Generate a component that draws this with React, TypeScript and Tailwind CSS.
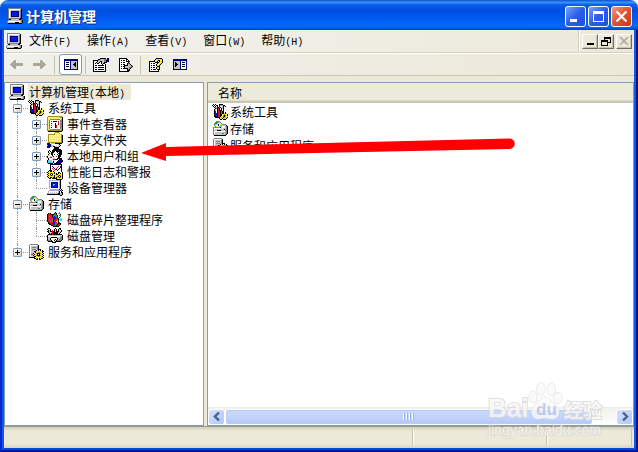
import { VscChromeClose } from "react-icons/vsc";

const colors: Record<string, string> = {
    k: "#000000", w: "#ffffff", g: "#c3c3c3", d: "#808080", b: "#000080", B: "#0018e8",
    y: "#f6e830", o: "#a89018", l: "#fbf6b0", r: "#e01020", n: "#10a830", c: "#40d8e8", m: "#e040c8",
    a: "#aca899", p: "#f4e878", v: "#a8a8dc",
};

const icons: Record<string, string> = {
    computer: `
.ddddddddddddd..
.dwwwwwwwwwwwgk.
.dwggggggggggdk.
.dwgbbbbbbbbgdk.
.dwgbBBBBBBbgdk.
.dwgbBBBBBBbgdk.
.dwgbBBBBBBbgdk.
.dwgbBBBBBBbgdk.
.dwgbbbbbbbbgdk.
.dwggggggggggdk.
.ddddddddddddkk.
..kkggggggggkk..
.dggggggggggggdk
dwwwwwwwwwwwwgdk
dgggggggkkkkggdk
.kkkkkkkkkkkkkk.`,
    tools: `
.k.k...kkkk.....
kwk.kk.kgggkk...
.kwkwk.kwwgkgk..
..kggkkdkggk....
...kdkrk.kgk....
..kcwkrk.kwk....
..kcwkrkkkgk....
..kBwkrrknkk....
..kBwkrrknkk.k..
..kBBkrrknkkyky.
..kBBkrrkkyyoyyk
..kBBkrrkkyokoyk
..kbbkrrkyyokoyy
...kkkkkyoykoyyk
.......kyykyyyk.
........kk.kkk..`,
    storage: `
....dddd........
...dnncyd.......
..dnncwyyd......
..dccwkwyydddd..
..dywwkwccggggk.
...dywwccgwwwgdk
.dddddddkgwwwgdk
.dwwwwwwwgwgggdk
.dwgggggggggkgdk
.dgggkkkkggggddk
.dwwwwwwwwwwwgdk
.dwggggggggggddk
.dwgggggggnnggdk
.dgggggggggggdk.
..kkkkkkkkkkkk..
................`,
    events: `
.oooooooooooooo.
oppppppppppppook
oplppppppppppplk
oppddddddddddpok
opdwwwwwwwwwwdok
opdwrwkkkkwrwdok
opdwwwwwwwwrwdok
opdwbwwwkwwrwdok
opdwwwwwkwwrwdok
opdwrwwwkrwwwdok
opdwwwwwkrwwwdok
opdwbwwwkrwwwdok
opdwwwwwwwwwwdok
oppddddddddddpok
oooooooooooooook
.kkkkkkkkkkkkkk.`,
    shared: `
........oooo....
.......olllpo...
.ooooooolplplpo.
.ollllllllllllok
.olplplplplplpok
.olpppppppppppok
.olplplplplplpok
.olpppppppppppok
.olplplplplplpok
.olpppppppppppok
.ooooooooooooook
bbb.ggggkkkkkkk.
bbbbgwwwwwwgk...
cbbbgggwwwwwgk..
bbbbggkkggggk...
bbb....kkkkk....`,
    users: `
.......kkkkk....
......kkkkkkkk..
..k..kkkkkkkkkk.
.k.k.kkkwkkkkkk.
.kwykkkwwwkwkkk.
..kwkkwwwwwkkkk.
.kwwkkwkwwkwkkk.
.ggwwkwwwwwkkk..
kwwgggkwwrwkkk..
kwgrrwgwwwwkk...
.kwwwwggwwkkkkk.
.kgwwgrrkkkwbbk.
kcgggwggwwwbbbbk
kcccgwkwwwbbbbbk
kccccckwwbbbbbk.
.kkkkk.kkkkkkk..`,
    performance: `
...kkkkkkkkkkkk.
...kwwwwwwwwwwk.
...kwbwwwwwrwbk.
...kwwbwwwrwwbk.
...kwrwbwrwwbwk.
...kwwrwrbwbwwk.
..kkkwwrwwbwwwk.
.kykkykwwwwwwwk.
kyyyyyykwwwkkwwk
.kyokoykykwkykwk
kyyk.kyyykkyyyyk
.kyokoykyyyokoyk
kyyyyyykyyok.kyk
.kykkykkykyokoyk
..kk.kkkkkyyyyyk
.........kkkkkk.`,
    devices: `
..vvvvvvvvvvvk..
..vwwwwwwwwwvk..
..vwbbbbbbbwvk..
..vwbBBBBBbwvk..
..vwbBccBBbwvk..
..vwbBcBBBbwvk..
..vwbBBBBBbwvk..
..vwbbbbbbbwvk..
..vwwwwwwwwwvk..
...vvvvvvvvvk.k.
..vvvvvvvvvvvkvk
.vwwwwwwwwwvk.k.
.vwgwgwgwgwvk.kk
vgggggggggvkkgvk
kkkkkkkkkkkkkvvk
.............kk.`,
    defrag: `
........k...m...
.krk...knk.mm...
krrrkkknnk...k..
krrrrknnnnk.nn..
krmrrknBnnk..n..
krrmrrkBBrk.k...
krrrrrkBBrrk.cc.
krmrnnkBrrrkccc.
krrrnnkrrryk.cc.
krrmnnkrryyk....
.krrrrBBrrykm...
.kkrrBBBnnrkkk..
..kkrrBBnnkrrk..
....kkrrnkrrk...
......kkkkkk....
................`,
    disks: `
.kk.....k...kk..
kggk...kwk.kgk..
.kgk.r.kgk.kg.k.
kkgkkrkkgkkkggk.
.kgggrkkbkkggk..
..kgkrkkbkkgk...
.kkkkrkkbkkkkkk.
kgggggggggggggwk
kwwwwwwwwwwwwgdk
kgggkkkkkkgggddk
kggkwwwwwwkggddk
kggkwwyykwkgnddk
kdddkwwkwkddddk.
.kkkkkwwkkkkkk..
.....kkkk.......
................`,
    services: `
..dddddddd......
.dwwwwwwwgk.....
.dwggggggdk.....
.dwgddddgdk.....
.dwggggggdk.....
.dwgddddgdkkk...
.dwgggggkyk.kyk.
.dwgggkkyyyyyykk
.dwggggkyyooyyk.
.dwggkyyokkkoyyk
.dwrrgkyyk.kyyk.
.dwggkyyokkkoyyk
.dwgggkkyyooyyk.
.kkkkkkyyyyyyyyk
......kkyk.kykk.
........kk.kk...`,
    back: `
....aa.......
...aaa.......
..aaaa.......
.aaaaaaaaaaaa
aaaaaaaaaaaaa
.aaaaaaaaaaaa
..aaaa.......
...aaa.......
....aa.......`,
    forward: `
.......aa....
.......aaa...
.......aaaa..
aaaaaaaaaaaa.
aaaaaaaaaaaaa
aaaaaaaaaaaa.
.......aaaa..
.......aaa...
.......aa....`,
    tree: `
bbbbbbbbbbbbbb
bbbbbbbbbbbbbb
bwwwwwbggggggb
bwkkkwbggggkgb
bwwwwwbgggkkgb
bwkkkwbggkkkgb
bwwwwwbgggkkgb
bwkkkwbggggkgb
bwwwwwbggggggb
bwwwwwbggggggb
bbbbbbbbbbbbbb`,
    actions: `
bbbbbbbbbbbbbb
bbbbbbbbbbbbbb
bggggggbwwwwwb
bgkggggbwkkkwb
bgkkgggbwwwwwb
bgkkkggbwkkkwb
bgkkgggbwwwwwb
bgkggggbwkkkwb
bggggggbwwwwwb
bggggggbwwwwwb
bbbbbbbbbbbbbb`,
    properties: `
.......kkkkkk.bb
.....kkdgggdddbb
kkkkkdgggggddkbb
kwwwkggkkggddkbb
kwwkggkwkggkkk..
kwkwkkwwkgkk....
kwwwwwwwwkwwk...
kwkkwkkkkkkwk...
kwwwwwwwwwwwk...
kwkkwkkkkkkwk...
kwwwwwwwwwwwk...
kwkkwkkkkkkwk...
kwwwwwwwwwwwk...
kkkkkkkkkkkkk...`,
    export: `
kkkkkkkk......
kwwwwwwkk.....
kwkwkkwkwk....
kwwwwwwkkkk...
kwkwkkwwwk....
kwwwwwwwkdk...
kwkwkkwwkggk..
kwwwwkkkkgggk.
kwkwkkggggggdk
kwwwwkggggddk.
kwkwkkkkkgdk..
kwwwwwwwkdk...
kwwwwwwwkkk...
kkkkkkkkkk....`,
    help: `
.......kkkkkk.
......kyyyyyyk
.....kyyykkyyk
kkkkkkyyk.kyyk
kwwwwwkkkkyyyk
kwkwkkwwkyyyk.
kwwwwwwkyyyk..
kwkwkkwkyyk...
kwwwwwwwkkk...
kwkwkkwkyyk...
kwwwwwwkyyk...
kwkwkkkwkkk...
kwwwwwwwwk....
kkkkkkkkkk....`,
};

const PixelIcon = ({ name }: { name: string }) => {
    const rows = icons[name].trim().split("\n");
    const width = rows[0].length;
    return (
        <svg className="shrink-0" width={width} height={rows.length} viewBox={`0 0 ${width} ${rows.length}`} shapeRendering="crispEdges" aria-hidden="true">
            {rows.map((row, y) =>
                [...row].map((c, x) => c !== "." && <rect key={`${x}-${y}`} x={x} y={y} width="1" height="1" fill={colors[c]} />)
            )}
        </svg>
    );
};

const menus = [["文件", "F"], ["操作", "A"], ["查看", "V"], ["窗口", "W"], ["帮助", "H"]];

// one guide for each indent column: "line" passes by, "tee" branches, "end" is the last branch
type Guide = "line" | "tee" | "end";
type Node = { label: string; icon: string; guides: Guide[]; box?: "+" | "-" };

const nodes: Node[] = [
    { label: "系统工具", icon: "tools", guides: ["tee"], box: "-" },
    { label: "事件查看器", icon: "events", guides: ["line", "tee"], box: "+" },
    { label: "共享文件夹", icon: "shared", guides: ["line", "tee"], box: "+" },
    { label: "本地用户和组", icon: "users", guides: ["line", "tee"], box: "+" },
    { label: "性能日志和警报", icon: "performance", guides: ["line", "tee"], box: "+" },
    { label: "设备管理器", icon: "devices", guides: ["line", "end"] },
    { label: "存储", icon: "storage", guides: ["tee"], box: "-" },
    { label: "磁盘碎片整理程序", icon: "defrag", guides: ["line", "tee"] },
    { label: "磁盘管理", icon: "disks", guides: ["line", "end"] },
    { label: "服务和应用程序", icon: "services", guides: ["end"], box: "+" },
];

const items = [
    { label: "系统工具", icon: "tools" },
    { label: "存储", icon: "storage" },
    { label: "服务和应用程序", icon: "services" },
];

const Mono = ({ children }: { children: React.ReactNode }) => (
    <span className="font-['Liberation_Mono'] text-[10px]">{children}</span>
);

const TitleBar = () => (
    <header className="flex h-[30px] shrink-0 items-center justify-between rounded-t-lg bg-[linear-gradient(180deg,#0a50c8_0%,#3b94ff_8%,#0a5ce8_16%,#0050e0_35%,#0058ee_60%,#0468fe_85%,#0060f8_92%,#0040c0_100%)] pr-1.5 pl-[7px]">
        <div className="flex items-center gap-[3px] pt-0.5">
            <PixelIcon name="computer" />
            <h1 className="text-[14px] leading-5 font-bold text-white [text-shadow:1px_1px_0_#0a2a80]">计算机管理</h1>
        </div>
        <div className="flex gap-0.5 pt-0.5">
            <button aria-label="最小化" className="flex size-[21px] items-end rounded-[3px] border border-white bg-linear-to-br from-[#7aa2f8] via-[#2a5ee8] to-[#1c50d8] p-1">
                <span className="h-[3px] w-[7px] bg-white" />
            </button>
            <button aria-label="最大化" className="flex size-[21px] items-center justify-center rounded-[3px] border border-white bg-linear-to-br from-[#7aa2f8] via-[#2a5ee8] to-[#1c50d8]">
                <span className="size-[11px] border border-t-3 border-white" />
            </button>
            <button aria-label="关闭" className="flex size-[21px] items-center justify-center rounded-[3px] border border-white bg-linear-to-br from-[#f09a80] via-[#e05030] to-[#c83c10]">
                <svg width="11" height="11" viewBox="0 0 11 11" stroke="#fff" strokeWidth="2.2"><path d="M0.5 0.5 10.5 10.5M10.5 0.5 0.5 10.5" /></svg>
            </button>
        </div>
    </header>
);

const mdiButton = "flex h-[15px] w-4 items-center justify-center border border-t-white border-l-white border-r-[#716f64] border-b-[#716f64] bg-[#ece9d8] shadow-[inset_-1px_-1px_0_#c8c4b0]";

const MenuBar = () => (
    <div className="flex h-[23px] shrink-0 items-stretch justify-between border-b border-[#d5d0ba] bg-linear-to-r from-[#f2f3f1] to-[#ece9d8] pl-0.5">
        <nav className="flex items-center gap-4">
            <div className="flex items-center gap-[7px]">
                <PixelIcon name="computer" />
                <button>{menus[0][0]}<Mono>({menus[0][1]})</Mono></button>
            </div>
            {menus.slice(1).map(([label, key]) => (
                <button key={key}>{label}<Mono>({key})</Mono></button>
            ))}
        </nav>
        <div className="flex items-center border-l border-[#d5d0ba] pr-0.5 pl-[3px] shadow-[inset_1px_0_0_#fff]">
            <button aria-label="最小化子窗口" className={mdiButton}><span className="mt-1.5 h-0.5 w-[7px] bg-black" /></button>
            <button aria-label="还原子窗口" className={mdiButton}>
                <svg width="10" height="9" viewBox="0 0 10 9" fill="none" stroke="#000" shapeRendering="crispEdges">
                    <path d="M3 0.5h7M3 1.5h7M3.5 1v2M9.5 1v5M7 5.5h3M0 3.5h7M0 4.5h7M0.5 4v5M6.5 4v5M0 8.5h7" />
                </svg>
            </button>
            <button aria-label="关闭子窗口" className={`${mdiButton} ml-0.5`}>
                <VscChromeClose className="size-3 text-[#aca899]" strokeWidth="1" />
            </button>
        </div>
    </div>
);

const Separator = () => <span className="h-[18px] w-px bg-[#c5c2b0]" />;

const ToolBar = () => (
    <div className="flex h-[23px] shrink-0 items-center border-t border-b border-t-white border-b-[#cbc7b4] bg-linear-to-r from-[#f0f0ec] to-[#ece9d8] pl-1.5">
        <div className="flex items-center gap-2.5 pr-2">
            <button aria-label="后退"><PixelIcon name="back" /></button>
            <button aria-label="前进"><PixelIcon name="forward" /></button>
        </div>
        <Separator />
        <button aria-label="显示/隐藏控制台树" className="mr-[3px] ml-1 flex h-[21px] w-[23px] items-center justify-center rounded-[3px] border border-[#7b9ebd] bg-white"><PixelIcon name="tree" /></button>
        <Separator />
        <div className="flex items-center gap-2.5 px-[7px]">
            <button aria-label="属性"><PixelIcon name="properties" /></button>
            <button aria-label="导出列表"><PixelIcon name="export" /></button>
        </div>
        <Separator />
        <div className="flex items-center gap-2.5 px-2">
            <button aria-label="帮助"><PixelIcon name="help" /></button>
            <button aria-label="显示/隐藏操作窗格"><PixelIcon name="actions" /></button>
        </div>
    </div>
);

const TreeRow = ({ label, icon, guides, box }: Node) => (
    <li className="flex h-4 items-center">
        {guides.map((guide, i) => (
            <span key={i} className="relative h-4 w-[19px] shrink-0">
                <span className={`absolute top-0 left-2 border-l border-dotted border-[#9a9a9a] ${guide === "end" ? "h-2" : "h-4"}`} />
                {guide !== "line" && (
                    <span className="absolute top-2 right-0 left-2 border-t border-dotted border-[#9a9a9a]" />
                )}
                {box && i === guides.length - 1 && (
                    <button aria-label={box === "+" ? `展开${label}` : `折叠${label}`} className="absolute top-1 left-1 size-[9px] rounded-[1px] border border-[#7b9ebd] bg-linear-to-br from-white to-[#d8d2c4]">
                        <svg className="block" width="7" height="7" viewBox="0 0 7 7" stroke="#000" shapeRendering="crispEdges">
                            <path d={box === "+" ? "M1 3.5h5M3.5 1v5" : "M1 3.5h5"} />
                        </svg>
                    </button>
                )}
            </span>
        ))}
        <div className="flex items-center gap-[3px]">
            <PixelIcon name={icon} />
            <span className="px-px whitespace-nowrap">{label}</span>
        </div>
    </li>
);

const Tree = () => (
    <aside className="w-[200px] shrink-0 overflow-hidden border border-[#7f9db9] bg-white pt-px pl-1">
        <div className="flex h-4 items-center gap-[3px]">
            <PixelIcon name="computer" />
            <span className="h-4 bg-[#ece9d8] pr-1.5 pl-px whitespace-nowrap">计算机管理<Mono>(</Mono>本地<Mono>)</Mono></span>
        </div>
        <ul>
            {nodes.map((node) => <TreeRow key={node.label} {...node} />)}
        </ul>
    </aside>
);

const scrollButton = "flex h-4 w-[17px] shrink-0 items-center justify-center rounded-[3px] border border-white bg-linear-to-br from-[#d4e0fd] to-[#b0c8f8]";

const ScrollBar = () => (
    <div className="flex h-[18px] shrink-0 items-center border-t border-[#eeede5] bg-linear-to-b from-[#f3f1ec] to-[#fefefb]">
        <button aria-label="向左滚动" className={scrollButton}>
            <svg width="8" height="9" viewBox="0 0 8 9" fill="none" stroke="#4d6185" strokeWidth="2.4"><path d="M6 0.5 2 4.5 6 8.5" /></svg>
        </button>
        <div className="h-4 flex-1">
            <div className="flex h-4 w-[94%] items-center justify-center gap-px rounded-[3px] border border-white bg-linear-to-b from-[#cbdafd] via-[#c3d3fb] to-[#b4c8f6] shadow-[inset_0_0_0_1px_#b8ccf8]">
                {[0, 1, 2, 3].map((i) => <span key={i} className="h-[7px] w-0.5 border-r border-[#8cb0f8] bg-white" />)}
            </div>
        </div>
        <button aria-label="向右滚动" className={scrollButton}>
            <svg width="8" height="9" viewBox="0 0 8 9" fill="none" stroke="#4d6185" strokeWidth="2.4"><path d="M2 0.5 6 4.5 2 8.5" /></svg>
        </button>
    </div>
);

const List = () => (
    <section className="flex min-w-0 flex-1 flex-col border border-[#7f9db9] bg-white">
        <div className="h-5 shrink-0 border-b-2 border-[#cbc7b8] bg-[#ebeadb] pl-2.5 leading-5 shadow-[inset_0_-1px_0_#e0dcca]">名称</div>
        <ul className="flex-1 pl-1">
            {items.map(({ label, icon }) => (
                <li key={label} className="flex h-[17px] items-center gap-0.5">
                    <PixelIcon name={icon} />
                    <span>{label}</span>
                </li>
            ))}
        </ul>
        <ScrollBar />
    </section>
);

const StatusBar = () => (
    <footer className="flex h-[22px] shrink-0 justify-end border-t border-[#9d9b8c] bg-[linear-gradient(180deg,#d0ccba_0,#ece9d8_4px,#ece9d8_17px,#d8d4c0_100%)] py-0.5 pr-0.5">
        <span className="w-[134px] border-l border-[#c5c2b0] shadow-[inset_1px_0_0_#fff]" />
        <span className="w-[86px] border-x border-[#c5c2b0] shadow-[inset_1px_0_0_#fff]" />
    </footer>
);

const Arrow = () => (
    <svg className="pointer-events-none absolute top-[138px] left-[141px]" width="374" height="24" viewBox="0 0 374 24" fill="#ff0000" aria-hidden="true">
        <path d="M0 15 25 5 25 9 368 0.5A5.2 5.2 0 0 1 369 11L25 18 25 23Z" />
    </svg>
);

const Watermark = () => (
    <div className="pointer-events-none absolute right-[34px] bottom-[14px] w-[116px] font-['Liberation_Sans','Noto_Sans_CJK_SC',sans-serif] text-[#f8f8f8] opacity-80 [paint-order:stroke_fill] [-webkit-text-stroke:2px_#d8d8d8]">
        <div className="relative flex h-[40px] items-end font-bold">
            <svg className="absolute top-0 left-9" width="40" height="40" viewBox="0 0 40 40" fill="#fafafa" stroke="#d8d8d8" strokeWidth="1.2" aria-hidden="true">
                <ellipse cx="9" cy="15" rx="4" ry="5.4" />
                <ellipse cx="17" cy="7" rx="4" ry="6" />
                <ellipse cx="27.5" cy="7.5" rx="4" ry="6" />
                <ellipse cx="34" cy="16" rx="4" ry="5.4" />
                <path d="M21 15c-5 0-6 5-10 8-4 3-4 8-2 11 3 5 8 2 12 2s10 3 13-2c2-4 1-8-3-11-4-3-5-8-10-8Z" />
            </svg>
            <span className="relative w-12 text-[26px] leading-7">Bai</span>
            <span className="relative w-7 text-[17px] leading-6 text-[#b4c4ec] [-webkit-text-stroke:0]">du</span>
            <span className="relative text-[19px] leading-5">经验</span>
        </div>
        <div className="text-[14px] leading-4 [-webkit-text-stroke:1px_#cfccc0]">jingyan.baidu.com</div>
    </div>
);

export default function App() {
    return (
        <div className="relative flex min-h-screen flex-col bg-white font-['Noto_Sans_CJK_SC',sans-serif] text-[12px] leading-4 text-black">
            <TitleBar />
            <div className="flex flex-1 flex-col border-x-2 border-b-2 border-r-[#001590] border-b-[#001590] border-l-[#0a28d0]">
                <div className="flex flex-1 flex-col border-x-2 border-b-2 border-x-[#1058e8] border-b-[#0848d8] bg-[#ece9d8]">
                    <MenuBar />
                    <ToolBar />
                    <main className="flex flex-1 gap-[3px] pt-1.5">
                        <Tree />
                        <List />
                    </main>
                    <StatusBar />
                </div>
            </div>
            <Arrow />
            <Watermark />
        </div>
    );
}
